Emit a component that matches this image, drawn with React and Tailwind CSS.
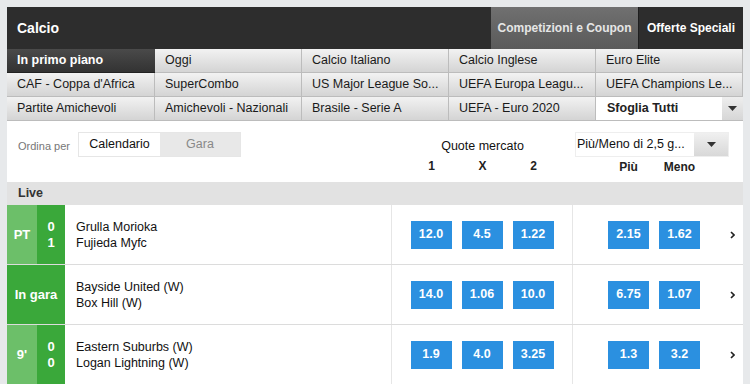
import React from "react";

const navItems = [
  "In primo piano", "Oggi", "Calcio Italiano", "Calcio Inglese", "Euro Elite",
  "CAF - Coppa d'Africa", "SuperCombo", "US Major League So...", "UEFA Europa Leagu...", "UEFA Champions Le...",
  "Partite Amichevoli", "Amichevoli - Nazionali", "Brasile - Serie A", "UEFA - Euro 2020",
];

const matches = [
  { status: "PT", score: ["0", "1"], home: "Grulla Morioka", away: "Fujieda Myfc", odds: ["12.0", "4.5", "1.22"], ou: ["2.15", "1.62"] },
  { status: "In gara", home: "Bayside United (W)", away: "Box Hill (W)", odds: ["14.0", "1.06", "10.0"], ou: ["6.75", "1.07"] },
  { status: "9'", score: ["0", "0"], home: "Eastern Suburbs (W)", away: "Logan Lightning (W)", odds: ["1.9", "4.0", "3.25"], ou: ["1.3", "3.2"] },
];

function Caret() {
  return (
    <svg width="9" height="5" viewBox="0 0 9 5">
      <path d="M0 0h9L4.5 5z" fill="#333" />
    </svg>
  );
}

function Odd({ value }) {
  return (
    <div className="w-[41px] h-[28px] bg-[#2b90e0] text-white text-[12.5px] font-bold flex items-center justify-center">
      {value}
    </div>
  );
}

export default function App() {
  return (
    <div className="w-[750px] h-[384px] bg-[#e7e9eb] pt-[7px] pl-[7px] overflow-hidden" style={{ fontFamily: '"Liberation Sans", Arial, sans-serif' }}>
      <div className="w-[736px] bg-white">
        {/* Header */}
        <div className="h-[42px] bg-[#2d2d2d] flex items-stretch">
          <div className="flex-1 flex items-center pl-[10px] text-white text-[14px] font-bold">Calcio</div>
          <div className="w-[147px] bg-gradient-to-b from-[#707070] to-[#5a5a5a] flex items-center justify-center text-[#e6e6e6] text-[12px] font-bold">
            Competizioni e Coupon
          </div>
          <div className="w-[105px] border-l border-[#1e1e1e] flex items-center justify-center text-white text-[12px] font-bold">
            Offerte Speciali
          </div>
        </div>

        {/* Nav grid */}
        <div className="grid grid-cols-[148px_147px_147px_147px_147px]">
          {navItems.map((item, i) => (
            <div
              key={item}
              className={
                i === 0
                  ? "h-[24px] flex items-center pl-[10px] text-[12.5px] font-bold text-white bg-gradient-to-b from-[#4a4a4a] to-[#333] border-b border-[#222]"
                  : "h-[24px] flex items-center pl-[10px] text-[12.5px] text-[#1a1a1a] bg-gradient-to-b from-[#f2f2f2] to-[#d4d4d4] border-b border-r border-[#bcbcbc]"
              }
            >
              {item}
            </div>
          ))}
          <div className="h-[24px] flex border-b border-[#bcbcbc]">
            <div className="flex-1 bg-white flex items-center pl-[11px] text-[12.5px] font-bold text-[#222]">Sfoglia Tutti</div>
            <div className="w-[21px] bg-gradient-to-b from-[#eee] to-[#d6d6d6] flex items-center justify-center">
              <Caret />
            </div>
          </div>
        </div>

        {/* Sort + market bar */}
        <div className="h-[61px] flex">
          <div className="w-[385px] flex items-start pt-[11px] pl-[11px]">
            <span className="text-[11px] text-[#777] mt-[6px] w-[60px]">Ordina per</span>
            <div className="flex h-[25px] border border-[#e6e6e6]">
              <div className="w-[81px] bg-white flex items-center justify-center text-[12.5px] text-[#111]">Calendario</div>
              <div className="w-[80px] bg-[#e8e8e8] flex items-center justify-center text-[12.5px] text-[#888]">Gara</div>
            </div>
          </div>
          <div className="w-[181px] flex flex-col items-center">
            <div className="h-[24px] mt-[13px] flex items-center text-[12.5px] text-[#111]">Quote mercato</div>
            <div className="flex gap-[10px] -mt-[1px]">
              {["1", "X", "2"].map((l) => (
                <div key={l} className="w-[41px] text-center text-[12px] font-bold text-[#222]">{l}</div>
              ))}
            </div>
          </div>
          <div className="flex-1 pl-[2px]">
            <div className="mt-[11px] w-[154px] h-[25px] flex border border-[#eee]">
              <div className="flex-1 bg-white flex items-center pl-[1px] text-[12.5px] text-[#111]">Più/Meno di 2,5 g...</div>
              <div className="w-[34px] bg-gradient-to-b from-[#f0f0f0] to-[#d8d8d8] flex items-center justify-center">
                <Caret />
              </div>
            </div>
            <div className="flex gap-[10px] pl-[33px] mt-[1px]">
              {["Più", "Meno"].map((l) => (
                <div key={l} className="w-[41px] text-center text-[12px] font-bold text-[#222]">{l}</div>
              ))}
            </div>
          </div>
        </div>

        {/* Live header */}
        <div className="h-[23px] bg-[#e2e2e2] flex items-center pl-[11px] text-[12.5px] font-bold text-[#333]">Live</div>

        {/* Matches */}
        {matches.map((m) => (
          <div key={m.home} className="h-[60px] flex border-b border-[#dcdcdc]">
            {m.score ? (
              <div className="w-[58px] flex">
                <div className="w-[30px] bg-[#6cbf69] flex items-center justify-center text-white text-[13px] font-bold">{m.status}</div>
                <div className="w-[28px] bg-[#3aa83a] flex flex-col items-center justify-center text-white text-[13px] font-bold leading-[16px]">
                  <span>{m.score[0]}</span>
                  <span>{m.score[1]}</span>
                </div>
              </div>
            ) : (
              <div className="w-[58px] bg-[#3aa83a] flex items-center justify-center text-white text-[13px] font-bold">{m.status}</div>
            )}
            <div className="w-[327px] border-r border-[#e6e6e6] flex flex-col justify-center pl-[11px] text-[12.5px] text-[#111] leading-[16px]">
              <span>{m.home}</span>
              <span>{m.away}</span>
            </div>
            <div className="w-[181px] border-r border-[#e6e6e6] flex items-center justify-center gap-[10px]">
              {m.odds.map((o, i) => (
                <Odd key={i} value={o} />
              ))}
            </div>
            <div className="flex-1 flex items-center pl-[35px]">
              <div className="flex gap-[10px]">
                {m.ou.map((o, i) => (
                  <Odd key={i} value={o} />
                ))}
              </div>
              <svg className="ml-[30px]" width="5" height="8" viewBox="0 0 5 8">
                <path d="M1 1l3 3-3 3" stroke="#222" strokeWidth="1.6" fill="none" />
              </svg>
            </div>
          </div>
        ))}
      </div>
    </div>
  );
}
